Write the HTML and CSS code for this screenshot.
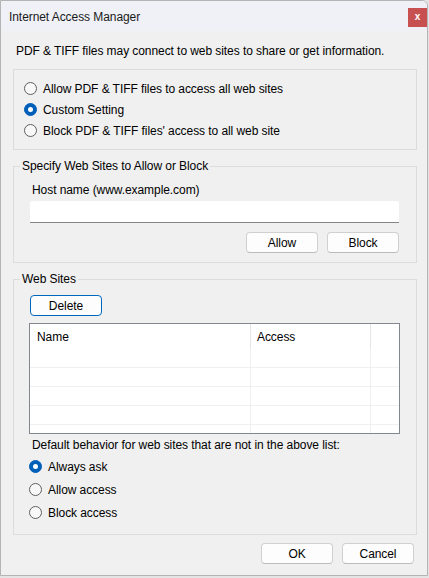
FILE: index.html
```html
<!DOCTYPE html>
<html>
<head>
    <meta charset="utf-8">
    <title>Internet Access Manager</title>
    <link rel="stylesheet" href="styles.css">
</head>
<body>
    <div class="window">
        <div class="titlebar">
            <span class="title">Internet Access Manager</span>
            <span class="close">x</span>
        </div>

        <div class="content">
            <p class="intro">PDF &amp; TIFF files may connect to web sites to share or get information.</p>

            <div class="group options">
                <div class="radio"><span class="dot"></span>Allow PDF &amp; TIFF files to access all web sites</div>
                <div class="radio"><span class="dot checked"></span>Custom Setting</div>
                <div class="radio"><span class="dot"></span>Block PDF &amp; TIFF files' access to all web site</div>
            </div>

            <fieldset class="group hosts">
                <legend>Specify Web Sites to Allow or Block</legend>
                <div class="field-label">Host name (www.example.com)</div>
                <div class="host-input"></div>
                <div class="host-buttons">
                    <button>Allow</button>
                    <button>Block</button>
                </div>
            </fieldset>

            <fieldset class="group sites">
                <legend>Web Sites</legend>
                <button class="focused">Delete</button>
                <div class="list">
                    <div class="list-row list-head">
                        <div class="cell">Name</div>
                        <div class="cell">Access</div>
                        <div class="cell"></div>
                    </div>
                    <div class="list-row"><div class="cell"></div><div class="cell"></div><div class="cell"></div></div>
                    <div class="list-row"><div class="cell"></div><div class="cell"></div><div class="cell"></div></div>
                    <div class="list-row"><div class="cell"></div><div class="cell"></div><div class="cell"></div></div>
                    <div class="list-row"><div class="cell"></div><div class="cell"></div><div class="cell"></div></div>
                    <div class="list-row"><div class="cell"></div><div class="cell"></div><div class="cell"></div></div>
                </div>
                <div class="field-label default-label">Default behavior for web sites that are not in the above list:</div>
                <div class="defaults">
                    <div class="radio"><span class="dot checked"></span>Always ask</div>
                    <div class="radio"><span class="dot"></span>Allow access</div>
                    <div class="radio"><span class="dot"></span>Block access</div>
                </div>
            </fieldset>

            <div class="actions">
                <button>OK</button>
                <button>Cancel</button>
            </div>
        </div>
    </div>
</body>
</html>
```

FILE: styles.css
```css
html {
    background-color: #e4e4e4;
}
body {
    margin: 0;
    font-family: "Liberation Sans", Arial, sans-serif;
    font-size: 12px;
    line-height: 16px;
    letter-spacing: -0.07px;
    color: #000;
}
.window {
    width: 426px;
    height: 574px;
    border: 1px solid #b4b4b4;
    border-top-right-radius: 6px;
    background-color: #f0f0f0;
    overflow: hidden;
}
.titlebar {
    height: 30px;
    display: flex;
    justify-content: space-between;
    align-items: flex-start;
    background-color: #eff1f7;
}
.title {
    margin: 8px 0 0 8px;
    color: #1a1a1a;
}
.close {
    width: 19px;
    height: 19px;
    margin-top: 7px;
    background-color: #c75050;
    color: #fff;
    font-weight: bold;
    font-size: 10px;
    line-height: 18px;
    text-align: center;
}
.content {
    padding: 0 10px 0 12px;
}
.intro {
    margin: 12px 0 0 3px;
}
.group {
    border: 1px solid #dcdcdc;
    margin: 0;
}
.options {
    margin-top: 10px;
    padding: 8px 10px;
}
.radio {
    height: 21px;
    display: flex;
    align-items: center;
}
.dot {
    width: 11px;
    height: 11px;
    border: 1px solid #5f5f5f;
    border-radius: 50%;
    background-color: #f8f8f8;
    margin-right: 6px;
    display: flex;
    align-items: center;
    justify-content: center;
}
.dot.checked {
    background-color: #005fb8;
    border-color: #005fb8;
}
.dot.checked::after {
    content: "";
    width: 5px;
    height: 5px;
    border-radius: 50%;
    background-color: #fff;
}
fieldset.group {
    padding: 6px 17px 9px 16px;
    min-width: 0;
}
legend {
    padding: 0 2px;
    margin-left: -10px;
    line-height: 16px;
}
.hosts {
    margin-top: 8px !important;
    padding-top: 8px !important;
}
.field-label {
    margin-left: 2px;
}
.host-input {
    width: 369px;
    height: 21px;
    margin-top: 3px;
    background-color: #fff;
    border-bottom: 1px solid #868686;
    border-radius: 3px 3px 0 0;
}
.host-buttons {
    margin-top: 9px;
    display: flex;
    justify-content: flex-end;
    gap: 9px;
    width: 369px;
}
button {
    width: 72px;
    height: 21px;
    padding: 0;
    font-family: inherit;
    font-size: 12px;
    letter-spacing: inherit;
    color: #000;
    background-color: #fdfdfd;
    border: 1px solid #d0d0d0;
    border-bottom-color: #bcbcbc;
    border-radius: 4px;
}
button.focused {
    border: 1px solid #0067c0;
}
.sites {
    margin-top: 8px !important;
    padding-top: 8px !important;
    padding-bottom: 10px !important;
}
.list {
    width: 369px;
    height: 109px;
    margin: 7px 0 0 -1px;
    border: 1px solid #828790;
    background-color: #fff;
    overflow: hidden;
}
.list-row {
    display: grid;
    grid-template-columns: 221px 120px 1fr;
    height: 18px;
    border-bottom: 1px solid #f0f0f0;
}
.list-row .cell {
    border-right: 1px solid #f0f0f0;
}
.list-row .cell:last-child {
    border-right: none;
}
.list-head {
    height: 25px;
    border-bottom: none;
    line-height: 26px;
}
.list-head .cell {
    border-right-color: #e5e5e5;
    padding-left: 7px;
}
.list-head .cell:nth-child(2) {
    padding-left: 6px;
}
.default-label {
    margin-top: 3px;
}
.defaults {
    margin: 2px 0 0 -1px;
}
.defaults .radio {
    height: 23px;
}
.actions {
    margin: 8px 3px 0 0;
    display: flex;
    justify-content: flex-end;
    gap: 9px;
}
```
